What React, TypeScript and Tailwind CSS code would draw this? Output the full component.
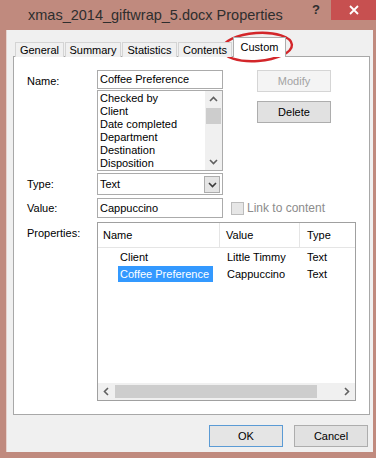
import React from 'react';

const TABS = ['General', 'Summary', 'Statistics', 'Contents', 'Custom'];
const TAB_WIDTHS: Record<string, string> = {
  General: 'w-[49px]',
  Summary: 'w-[56px]',
  Statistics: 'w-[55px]',
  Contents: 'w-[54px]',
  Custom: 'w-[53px]',
};

const NAMES = ['Checked by', 'Client', 'Date completed', 'Department', 'Destination', 'Disposition'];

const ROWS = [
  { name: 'Client', value: 'Little Timmy', type: 'Text', selected: false },
  { name: 'Coffee Preference', value: 'Cappuccino', type: 'Text', selected: true },
];

const Chevron = ({ dir, className }: { dir: 'up' | 'down' | 'left' | 'right'; className?: string }) => {
  const pts = {
    up: '1,6 4.5,2.5 8,6',
    down: '1,3 4.5,6.5 8,3',
    left: '6,1 2.5,4.5 6,8',
    right: '3,1 6.5,4.5 3,8',
  }[dir];
  return (
    <svg width="9" height="9" viewBox="0 0 9 9" className={className}>
      <polyline points={pts} fill="none" stroke="currentColor" strokeWidth="1.6" />
    </svg>
  );
};

const Button = ({ label, disabled, primary }: { label: string; disabled?: boolean; primary?: boolean }) => (
  <div
    className={`flex h-[22px] w-[74px] items-center justify-center border text-[11px] ${
      disabled
        ? 'border-[#d5d5d5] bg-[#f4f4f4] text-[#a3a3a3]'
        : primary
          ? 'border-[#5b9bd5] bg-[#e5e5e5] text-black'
          : 'border-[#adadad] bg-[#e1e1e1] text-black'
    }`}
  >
    {label}
  </div>
);

export default function App() {
  return (
    <div className="relative flex h-[458px] w-[376px] flex-col overflow-hidden bg-[#c08a7e] font-['Liberation_Sans',Arial,sans-serif] text-black">
      {/* title bar */}
      <div className="flex h-[30px] items-start">
        <div className="pl-[28px] pt-[6px] text-[14.5px] leading-[18px] text-[#2e2e2e]">
          xmas_2014_giftwrap_5.docx Properties
        </div>
        <div className="ml-auto pt-[3px] pr-[11px] text-[13px] font-bold leading-[14px] text-[#2e2e2e]">?</div>
        <div className="flex h-[20px] w-[45px] items-center justify-center bg-[#c75050]">
          <svg width="10" height="10" viewBox="0 0 10 10">
            <path d="M1 1L9 9M9 1L1 9" stroke="#fff" strokeWidth="1.8" />
          </svg>
        </div>
      </div>

      {/* client area */}
      <div className="ml-[6px] mr-[3px] flex h-[422px] flex-col border-l border-[#e6d2cd] bg-[#f0f0f0] pt-[8px]">
        {/* tabs */}
        <div className="relative z-10 ml-[7px] flex h-[19px] items-end pl-[1px]">
          {TABS.map(t =>
            t === 'Custom' ? (
              <div
                key={t}
                className={`${TAB_WIDTHS[t]} flex h-[20px] items-center justify-center border border-b-0 border-[#adadad] bg-white pb-[1px] text-[11px]`}
              >
                {t}
              </div>
            ) : (
              <div
                key={t}
                className={`${TAB_WIDTHS[t]} mr-px flex h-[15px] items-center justify-center border border-b-0 border-[#d4d4d4] bg-[#f0f0f0] pt-[1px] text-[11px]`}
              >
                {t}
              </div>
            ),
          )}
        </div>

        {/* panel */}
        <div className="-mt-px ml-[6px] flex h-[359px] w-[357px] flex-col border border-[#a8a8a8] bg-white pl-[13px] pt-[13px] text-[11px]">
          {/* name + list + buttons */}
          <div className="flex">
            <div className="w-[70px] pt-[3px]">Name:</div>
            <div className="flex w-[126px] flex-col">
              <div className="flex h-[19px] items-center border border-[#ababab] pl-[2px]">Coffee Preference</div>
              <div className="mt-px flex h-[81px] border border-[#ababab]">
                <div className="flex flex-1 flex-col pl-[2px] pt-[1px] leading-[13px]">
                  {NAMES.map(n => (
                    <div key={n}>{n}</div>
                  ))}
                </div>
                <div className="flex w-[17px] flex-col bg-[#f0f0f0] text-[#606060]">
                  <div className="flex h-[17px] items-center justify-center">
                    <Chevron dir="up" />
                  </div>
                  <div className="mx-[1px] h-[16px] bg-[#cdcdcd]" />
                  <div className="flex-1" />
                  <div className="flex h-[17px] items-center justify-center">
                    <Chevron dir="down" />
                  </div>
                </div>
              </div>
            </div>
            <div className="ml-[34px] flex flex-col gap-[9px]">
              <Button label="Modify" disabled />
              <Button label="Delete" />
            </div>
          </div>

          {/* type */}
          <div className="mt-[2px] flex items-center">
            <div className="w-[70px]">Type:</div>
            <div className="flex h-[22px] w-[126px] items-center border border-[#ababab] pl-[2px] pr-[2px]">
              <span className="flex-1">Text</span>
              <div className="flex h-[17px] w-[16px] items-center justify-center border border-[#adadad] bg-[#e5e5e5] text-[#3c3c3c]">
                <Chevron dir="down" />
              </div>
            </div>
          </div>

          {/* value */}
          <div className="mt-[3px] flex items-center">
            <div className="w-[70px]">Value:</div>
            <div className="flex h-[20px] w-[126px] items-center border border-[#ababab] pl-[2px]">Cappuccino</div>
            <div className="ml-[8px] h-[13px] w-[13px] border border-[#bcbcbc] bg-[#e6e6e6]" />
            <div className="ml-[3px] text-[12px] text-[#8c8c8c]">Link to content</div>
          </div>

          {/* properties */}
          <div className="mt-[4px] flex">
            <div className="w-[70px] pt-[3px]">Properties:</div>
            <div className="flex h-[179px] w-[259px] flex-col border border-[#a0a0a0]">
              <div className="flex h-[25px] items-center border-b border-[#e5e5e5]">
                <div className="flex h-full w-[122px] items-center border-r border-[#e5e5e5] pl-[5px]">Name</div>
                <div className="flex h-full w-[80px] items-center border-r border-[#e5e5e5] pl-[6px]">Value</div>
                <div className="pl-[7px]">Type</div>
              </div>
              <div className="flex flex-col pt-[1px]">
                {ROWS.map(r => (
                  <div key={r.name} className="flex h-[17px] items-center">
                    <div className="w-[122px] pl-[20px]">
                      <span className={`px-[2px] py-[2px] ${r.selected ? 'bg-[#3399ff] pr-[4px] text-white' : ''}`}>{r.name}</span>
                    </div>
                    <div className="w-[80px] pl-[7px]">{r.value}</div>
                    <div className="pl-[7px]">{r.type}</div>
                  </div>
                ))}
              </div>
              <div className="flex-1" />
              <div className="flex h-[17px] items-center bg-[#f0f0f0] text-[#606060]">
                <div className="flex w-[17px] items-center justify-center">
                  <Chevron dir="left" />
                </div>
                <div className="h-[13px] w-[202px] bg-[#cdcdcd]" />
                <div className="flex-1" />
                <div className="flex w-[17px] items-center justify-center">
                  <Chevron dir="right" />
                </div>
              </div>
            </div>
          </div>
        </div>

        {/* buttons */}
        <div className="mt-[10px] flex justify-end gap-[11px] pr-[5px]">
          <Button label="OK" primary />
          <Button label="Cancel" />
        </div>
      </div>

      {/* red highlight around Custom tab */}
      <svg className="pointer-events-none absolute left-[219px] top-[29px]" width="76" height="36" viewBox="0 0 76 36">
        <ellipse cx="38" cy="18" rx="35" ry="14" fill="none" stroke="#d3262a" strokeWidth="2.4" transform="rotate(-4 38 18)" />
      </svg>
    </div>
  );
}
